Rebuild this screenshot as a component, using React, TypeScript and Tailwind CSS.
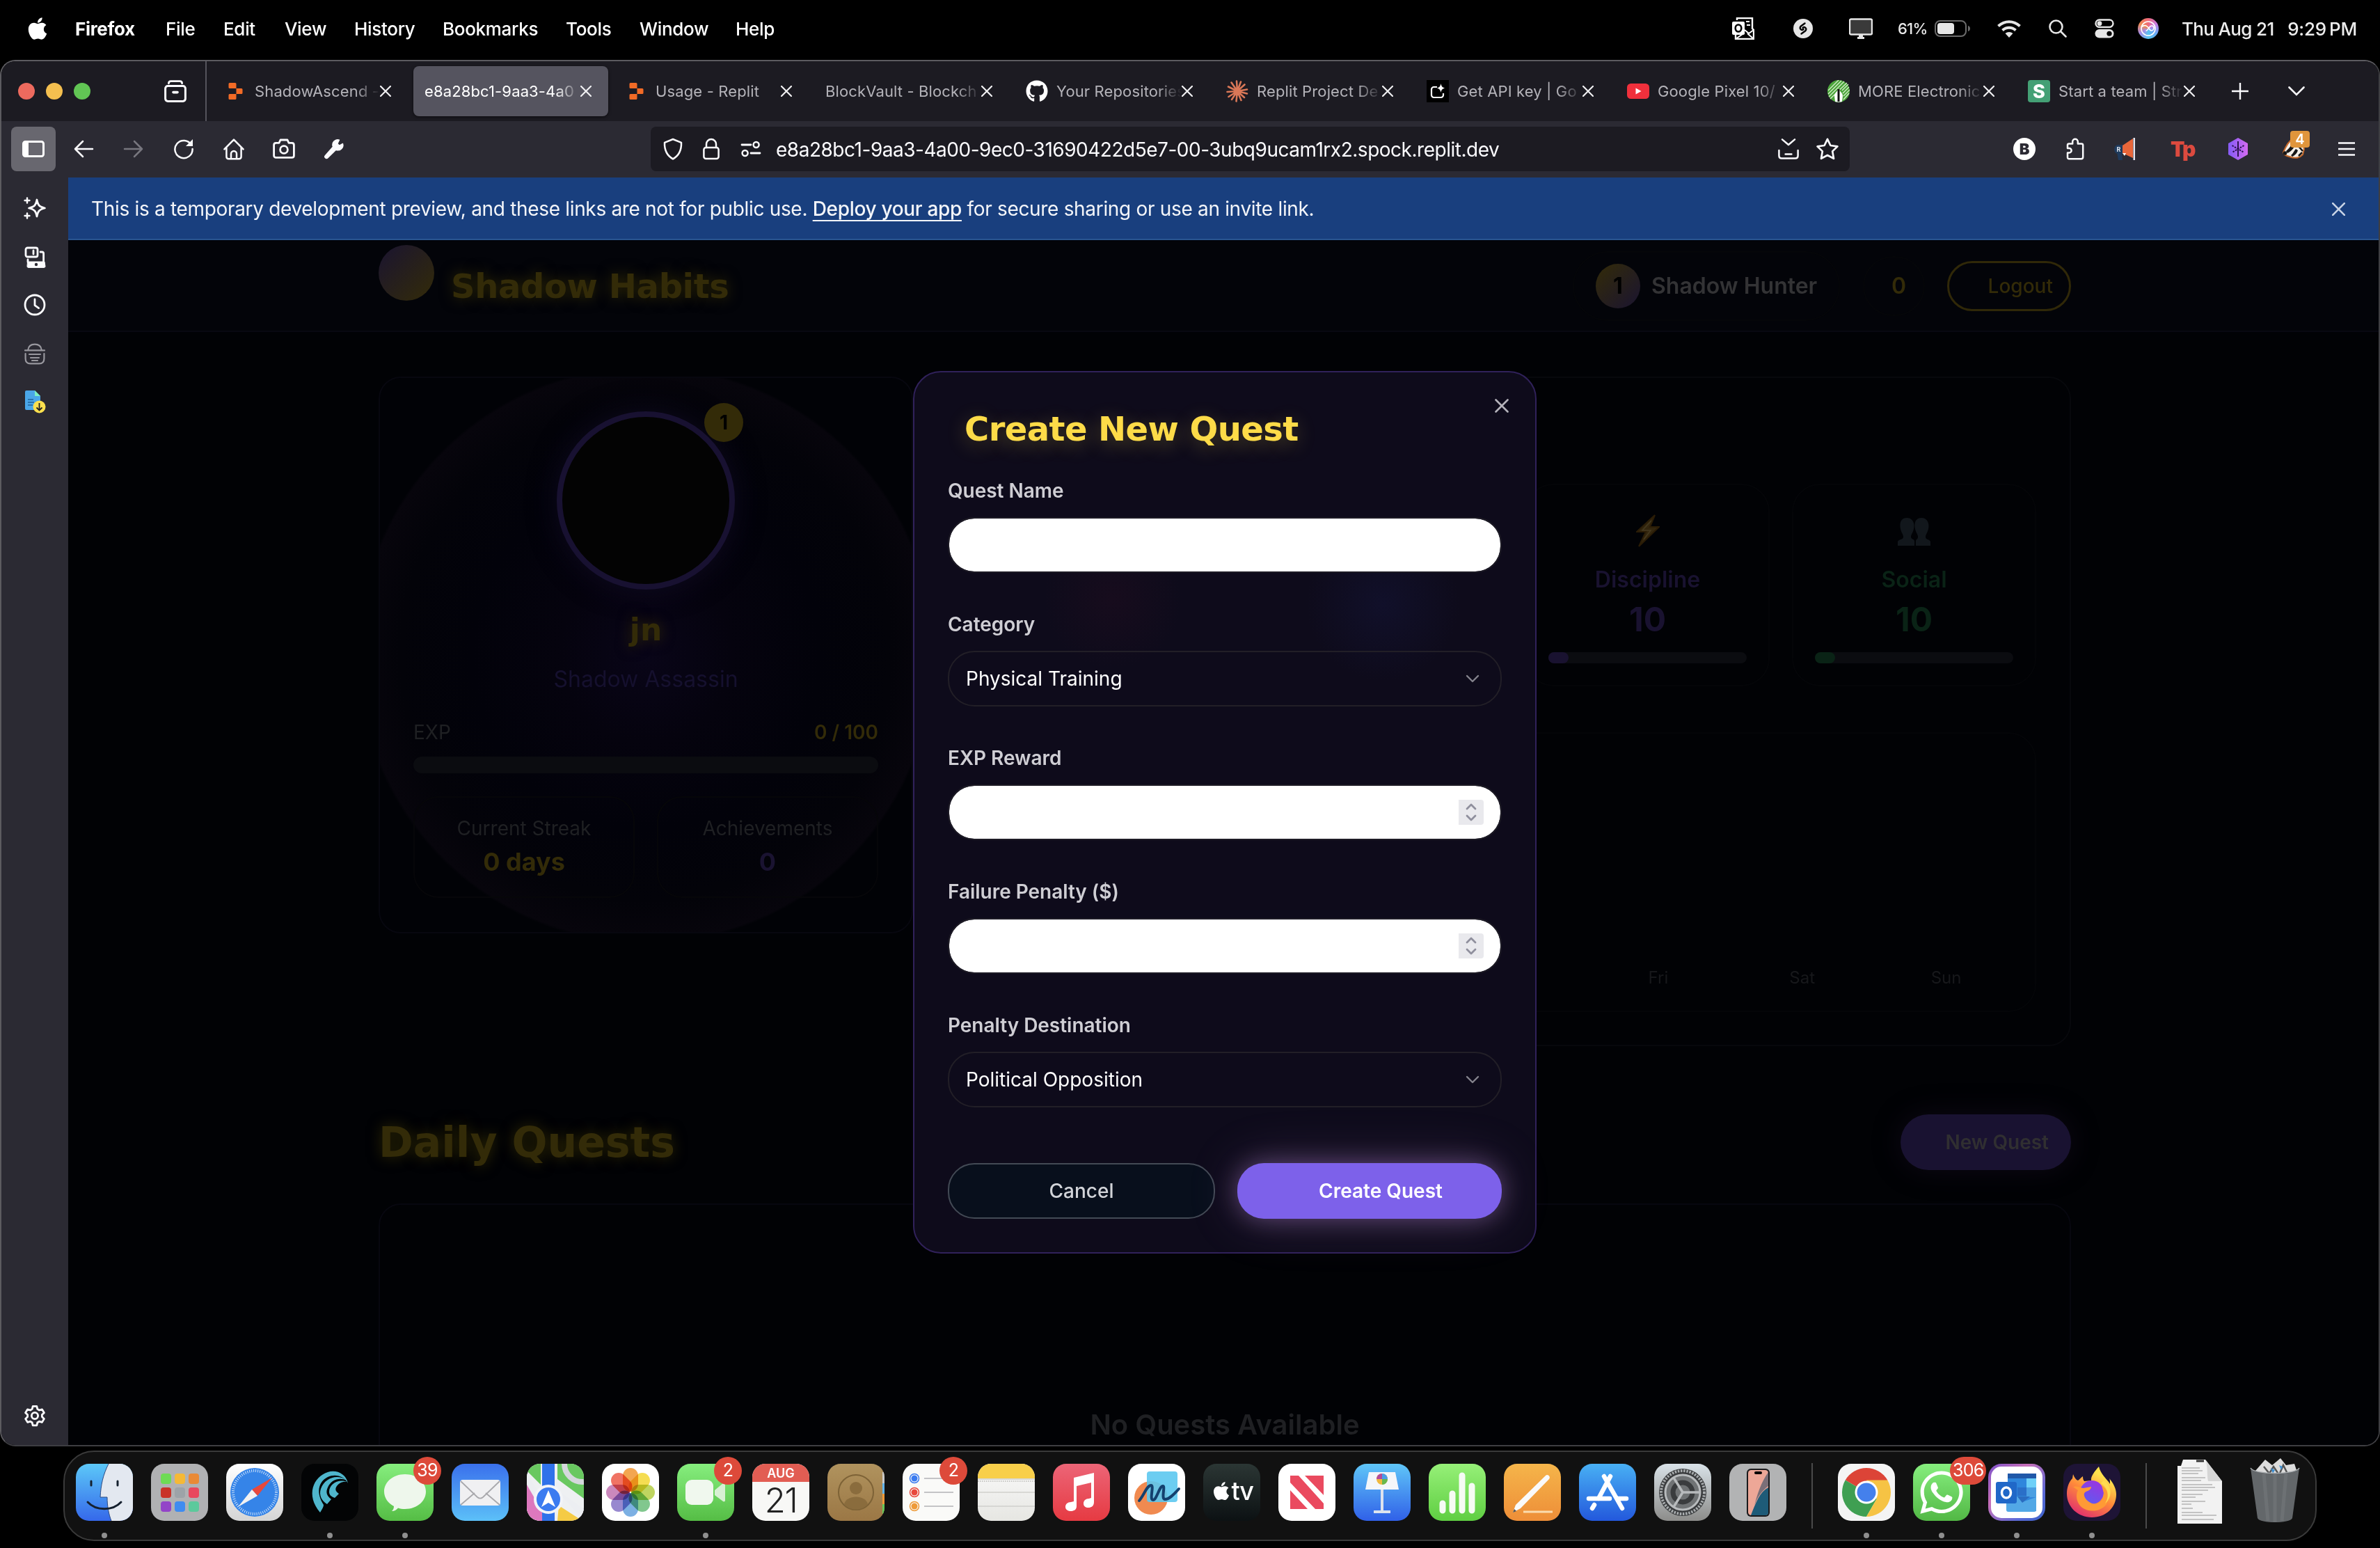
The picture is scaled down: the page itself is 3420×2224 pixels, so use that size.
import React from "react";
import { FaApple, FaGithub, FaWhatsapp } from "react-icons/fa";

type Kids = { children?: React.ReactNode; className?: string };

/* 16-unit stroked glyph used through the browser chrome */
function Glyph({ children, className = "size-8" }: Kids) {
  return (
    <svg viewBox="0 0 16 16" className={className} fill="none" stroke="currentColor" strokeWidth="1.25" strokeLinecap="round" strokeLinejoin="round">
      {children}
    </svg>
  );
}

const Close = ({ className = "size-4" }: { className?: string }) => (
  <svg viewBox="0 0 16 16" className={className} fill="none" stroke="currentColor" strokeWidth="2.2" strokeLinecap="round">
    <path d="M1 1l14 14M15 1L1 15" />
  </svg>
);

/* ---------- macOS menu bar ---------- */
function MenuBar() {
  return (
    <div className="flex h-[86px] shrink-0 items-center pb-1 text-[26px] tracking-[-0.012em] text-white">
      <FaApple className="ml-[36px] size-[36px]" />
      <div className="ml-[36px] w-[130px] font-bold">Firefox</div>
      <div className="w-[83px] font-medium">File</div>
      <div className="w-[88px] font-medium">Edit</div>
      <div className="w-[100px] font-medium">View</div>
      <div className="w-[127px] font-medium">History</div>
      <div className="w-[177px] font-medium">Bookmarks</div>
      <div className="w-[106px] font-medium">Tools</div>
      <div className="w-[138px] font-medium">Window</div>
      <div className="font-medium">Help</div>
      <div className="ml-auto flex items-center">
        <svg viewBox="0 0 32 32" className="size-8">
          <path d="M7 4V1h22v15l2 2v13H5v-6" fill="none" stroke="#fff" strokeWidth="2.4" />
          <path d="M18 18l6 5 7-5M5 31l13-9M31 31l-9-8" fill="none" stroke="#fff" strokeWidth="2" />
          <rect x="0" y="6" width="18" height="19" rx="2" fill="#fff" />
          <ellipse cx="9" cy="15.500" rx="4.300" ry="5" fill="none" stroke="#000" strokeWidth="2.600" />
          <path d="M20 6h5M21 11h5" stroke="#fff" strokeWidth="2" />
        </svg>
        <svg viewBox="0 0 28 28" className="ml-[56px] size-7">
          <circle cx="14" cy="14" r="14" fill="#e6e6e6" />
          <path d="M16.500 6.500l-5.500 4c-3.500 3 .5 7 3.500 4.500M11.500 21.500l5.500-4c3.500-3-.5-7-3.500-4.500" fill="none" stroke="#000" strokeWidth="2.400" strokeLinecap="round" />
        </svg>
        <svg viewBox="0 0 34 30" className="ml-[52px] h-[30px] w-[34px]">
          <rect x="1" y="1.500" width="32" height="22" rx="2" fill="#3a3a3a" stroke="#e6e6e6" strokeWidth="2.400" />
          <path d="M12 27h10v3H12zM14 24h6v3h-6z" fill="#e6e6e6" />
        </svg>
        <div className="ml-[36px] w-[53px] text-[22px] font-medium tracking-[-0.035em] text-[#e8e8e8]">61%</div>
        <svg viewBox="0 0 52 24" className="h-6 w-[52px]">
          <rect x="1" y="1" width="44" height="22" rx="7" fill="none" stroke="#6b6b6b" strokeWidth="2" />
          <rect x="4" y="4" width="24" height="16" rx="4" fill="#e6e6e6" />
          <path d="M48 8c4 1 4 7 0 8z" fill="#6b6b6b" />
        </svg>
        <svg viewBox="0 0 34 25" className="ml-[38px] h-[25px] w-[34px] text-[#e6e6e6]" fill="none" stroke="currentColor" strokeWidth="4">
          <path d="M1.500 8.500c9-8.500 22-8.500 31 0M7.500 14.500c5.500-5 13.500-5 19 0" />
          <path d="M17 25l-5.500-6c3-2.700 8-2.700 11 0z" fill="currentColor" stroke="none" />
        </svg>
        <svg viewBox="0 0 26 26" className="ml-[40px] size-[26px] text-[#e6e6e6]" fill="none" stroke="currentColor" strokeWidth="2.600" strokeLinecap="round">
          <circle cx="10.500" cy="10.500" r="9" />
          <path d="M17 17l7.500 7.500" />
        </svg>
        <svg viewBox="0 0 28 28" className="ml-[40px] size-7">
          <rect x="1.500" y="1.500" width="25" height="10.500" rx="5.250" fill="none" stroke="#e6e6e6" strokeWidth="2.400" />
          <circle cx="7" cy="6.750" r="3.400" fill="#e6e6e6" />
          <rect x="0.500" y="15" width="27" height="12.500" rx="6.250" fill="#e6e6e6" />
          <circle cx="21" cy="21.250" r="3.600" fill="#000" />
        </svg>
        <div className="ml-[34px] flex size-[30px] items-center justify-center rounded-full bg-[conic-gradient(from_0deg,#f06a7a,#c77be0,#6aa8f5,#58c5f0,#a58de8,#ee8a50,#f06a7a)]">
          <svg viewBox="0 0 24 24" className="size-6" fill="none" stroke="#fff" strokeWidth="1.600">
            <circle cx="12" cy="12" r="10" />
            <path d="M3 9.500c4-4 8-1 10 2.500s5 4 6.500 1-1-6-4-4.500-3.500 6-7 7" />
          </svg>
        </div>
        <div className="ml-[33px] mr-[33px] flex w-[252px] justify-between font-medium tracking-[-0.025em] whitespace-nowrap text-[#ececec]">
          <span>Thu Aug 21</span>
          <span className="tracking-[-0.01em]">9:29{"\u2009"}PM</span>
        </div>
      </div>
    </div>
  );
}

/* ---------- tab favicons ---------- */
const ReplitIcon = () => (
  <svg viewBox="0 0 32 32" className="size-8" fill="#f26b26">
    <path d="M8 4h8a1.500 1.500 0 011.500 1.500V12H8a1.500 1.500 0 01-1.500-1.500v-5A1.500 1.500 0 018 4zM17.500 12H25a1.500 1.500 0 011.500 1.500v5A1.500 1.500 0 0125 20h-7.500zM8 20h9.500v6.500A1.500 1.500 0 0116 28H8a1.500 1.500 0 01-1.500-1.500v-5A1.500 1.500 0 018 20z" />
  </svg>
);
const ClaudeIcon = () => (
  <svg viewBox="0 0 32 32" className="size-8" stroke="#d97757" strokeWidth="2.600" strokeLinecap="round">
    <path d="M16 16L15 1.500M16 16l5-13.500M16 16l10.500-9.500M16 16l14-2.500M16 16l14 3.500M16 16l10 9M16 16l5.500 13M16 16l-1.500 14.500M16 16L8 28M16 16L3.500 24M16 16L1.500 17M16 16L3 9.500M16 16L7.500 3.500" />
  </svg>
);
const ApiIcon = () => (
  <svg viewBox="0 0 32 32" className="size-8">
    <rect width="32" height="32" fill="#000" />
    <path d="M15 10H10.500A3.500 3.500 0 007 13.500v8a3.500 3.500 0 003.500 3.500h10a3.500 3.500 0 003.500-3.500V19" fill="none" stroke="#fff" strokeWidth="2.200" />
    <path d="M20.500 5c.8 4 2 5.500 5.500 6.500-3.500 1-4.700 2.500-5.500 6.500-.8-4-2-5.500-5.500-6.500 3.500-1 4.700-2.500 5.500-6.500z" fill="#fff" />
  </svg>
);
const YoutubeIcon = () => (
  <svg viewBox="0 0 32 32" className="size-8">
    <rect y="5" width="32" height="22" rx="5.500" fill="#f0303c" />
    <path d="M12.500 11.500v9l8-4.500z" fill="#fff" />
  </svg>
);
const DollarTreeIcon = () => (
  <svg viewBox="0 0 32 32" className="size-8">
    <circle cx="16" cy="16" r="16" fill="#4ba43a" />
    <path d="M1 15L16 0M1 20L20 1M2 24L24 2M4 27L28 4M21 15l9-9M22 19l9-9M23 23l9-9M23 28l8-9" stroke="#d9f0d0" strokeWidth="1.200" />
    <path d="M16 12c1.500 5 6 6 6 11l-1 8a16 16 0 01-10 0l-1-8c0-5 4.500-6 6-11z" fill="#fff" />
    <path d="M16 13v18" stroke="#111" strokeWidth="3" />
  </svg>
);
const StripeIcon = () => (
  <div className="flex size-8 items-center justify-center rounded-[4px] bg-[#44a075] text-[27px] leading-none font-extrabold text-white">S</div>
);

function Tab({ icon, title, active }: { icon?: React.ReactNode; title: string; active?: boolean }) {
  return (
    <div className={active ? "flex h-[72px] w-[280px] items-center rounded-[8px] bg-[#55545f] px-4 text-white shadow-[0_1px_4px_rgba(0,0,0,0.6)]" : "flex h-[72px] w-[280px] items-center px-4 text-[#b4b3b9]"}>
      {icon && <div className="mr-3 shrink-0">{icon}</div>}
      <div className="min-w-0 flex-1 text-[22px] tracking-[0.006em] whitespace-nowrap [mask-image:linear-gradient(to_right,black_calc(100%-36px),transparent)]">{title}</div>
      <Close className="mr-2 size-4 shrink-0 text-[#f0f0f2]" />
    </div>
  );
}

function TabStrip() {
  return (
    <div className="flex h-[86px] shrink-0 items-center bg-[#1c1b22]">
      <div className="ml-[24px] flex gap-4">
        <div className="size-6 rounded-full bg-[#ed6a5e]" />
        <div className="size-6 rounded-full bg-[#f4bf4f]" />
        <div className="size-6 rounded-full bg-[#61c554]" />
      </div>
      <Glyph className="ml-[106px] size-8 text-[#fbfbfe]">
        <path d="M3.200 2.400C3.200 1.200 3.800.8 4.800.8h6.400c1 0 1.600.4 1.600 1.600" strokeWidth="1.400" />
        <rect x="0.800" y="4.200" width="14.400" height="11" rx="1.800" strokeWidth="1.500" />
        <path d="M6.500 8.800h3" strokeWidth="1.800" />
      </Glyph>
      <div className="ml-[27px] h-[86px] w-[2px] bg-[#55545c]" />
      <div className="ml-[9px] flex gap-2">
        <Tab icon={<ReplitIcon />} title="ShadowAscend -" />
        <Tab title="e8a28bc1-9aa3-4a0" active />
        <Tab icon={<ReplitIcon />} title="Usage - Replit" />
        <Tab title="BlockVault - Blockch" />
        <Tab icon={<FaGithub className="size-8 text-white" />} title="Your Repositories" />
        <Tab icon={<ClaudeIcon />} title="Replit Project De" />
        <Tab icon={<ApiIcon />} title="Get API key | Go" />
        <Tab icon={<YoutubeIcon />} title="Google Pixel 10/" />
        <Tab icon={<DollarTreeIcon />} title="MORE Electronic" />
        <Tab icon={<StripeIcon />} title="Start a team | Str" />
      </div>
      <svg viewBox="0 0 24 24" className="ml-[29px] size-6 text-[#fbfbfe]" stroke="currentColor" strokeWidth="2.400">
        <path d="M12 0v24M0 12h24" />
      </svg>
      <svg viewBox="0 0 24 14" className="ml-[57px] h-[14px] w-6 text-[#fbfbfe]" fill="none" stroke="currentColor" strokeWidth="2.600" strokeLinecap="round">
        <path d="M1.500 1.500L12 12 22.500 1.500" />
      </svg>
    </div>
  );
}

function Toolbar() {
  return (
    <div className="flex h-[81px] shrink-0 items-center bg-[#2b2a33] pr-[34px] pb-px text-[#fbfbfe]">
      <div className="ml-[14px] flex h-16 w-16 items-center justify-center rounded-[8px] bg-[#68676f]">
        <svg viewBox="0 0 32 24" className="h-6 w-8">
          <rect x="1.500" y="1.500" width="29" height="21" rx="3" fill="none" stroke="#fff" strokeWidth="3" />
          <path d="M1 2h8v20H1z" fill="#fff" />
        </svg>
      </div>
      <div className="ml-[24px] flex items-center gap-[40px]">
        <Glyph className="size-8"><path d="M14.500 8H2M7.500 2.500L2 8l5.500 5.500" /></Glyph>
        <Glyph className="size-8 text-[#77767e]"><path d="M1.500 8H14M8.500 2.500L14 8l-5.500 5.500" /></Glyph>
        <Glyph className="size-8">
          <path d="M13.500 5.200A6.300 6.300 0 1014.300 8" />
          <path d="M14.500 1v5h-5z" fill="currentColor" stroke="none" />
        </Glyph>
        <Glyph className="size-8"><path d="M1.200 8.200L8 1.300l6.800 6.900M2.700 7v6.500c0 1 .6 1.600 1.600 1.600h7.400c1 0 1.600-.6 1.600-1.600V7M6 15v-3.500a2 2 0 014 0V15" /></Glyph>
        <Glyph className="size-8">
          <path d="M2.300 3.700h2.200l1-2.200h5l1 2.200h2.200c.9 0 1.500.6 1.500 1.500v7.500c0 .9-.6 1.500-1.500 1.500H2.300c-.9 0-1.500-.6-1.500-1.500V5.200c0-.9.600-1.500 1.500-1.500z" strokeWidth="1.400" />
          <circle cx="8" cy="8.500" r="2.700" strokeWidth="1.400" />
        </Glyph>
        <Glyph className="size-8"><path d="M14.300 4.200l-2.500 1.300-1.300-1.300 1.300-2.700a3.700 3.700 0 00-4.600 4.900L1.700 12.700a1.200 1.200 0 001.800 1.700l5.900-5.700a3.700 3.700 0 004.900-4.500z" fill="currentColor" strokeWidth="0.600" /></Glyph>
      </div>
      <div className="ml-[439px] flex h-16 w-[1723px] items-center rounded-[8px] bg-[#1c1b22] px-4">
        <Glyph className="size-8"><path d="M8 1l6 2.400C14.200 9 12 13 8 15.200 4 13 1.800 9 2 3.400z" /></Glyph>
        <Glyph className="ml-[23px] size-8"><rect x="2.700" y="7" width="10.600" height="8" rx="1.500" /><path d="M4.500 7V4.500a3.500 3.500 0 017 0V7" /></Glyph>
        <Glyph className="ml-[25px] size-8"><path d="M1.500 5h6.500M8 11h6.500" strokeWidth="1.400" /><circle cx="11.800" cy="5" r="2" /><circle cx="3.800" cy="11" r="2" /></Glyph>
        <div className="ml-[20px] pt-0.5 text-[28px] tracking-[-0.0172em] whitespace-nowrap">e8a28bc1-9aa3-4a00-9ec0-31690422d5e7-00-3ubq9ucam1rx2.spock.replit.dev</div>
        <Glyph className="ml-auto size-8"><path d="M3.500 1.200L8 5l4.500-3.800M1.200 9v3.800c0 1.200.7 2 1.900 2h9.800c1.200 0 1.900-.8 1.900-2V9M5.800 11.700h4.400" /></Glyph>
        <Glyph className="ml-[24px] size-8"><path d="M8 .9l2.200 4.600 5 .7-3.600 3.500.9 5.200L8 12.500l-4.500 2.400.9-5.200L.8 6.200l5-.7z" strokeWidth="1.350" /></Glyph>
      </div>
      <div className="ml-auto flex items-center">
        <div className="flex size-8 items-center justify-center rounded-full bg-white text-[22px] font-black text-[#2b2a33]">B</div>
        <Glyph className="ml-[42px] size-8"><path d="M2 14v-3.300h1.200a1.600 1.600 0 000-3.200H2V5.300c0-.7.400-1 1-1h2.600V2.800a1.900 1.900 0 013.800 0v1.500H12c.7 0 1.100.4 1.100 1.100v8.500c0 .8-.5 1.200-1.200 1.200H3.100c-.7 0-1.100-.5-1.100-1.100z" /></Glyph>
        <svg viewBox="0 0 32 32" className="ml-[38px] size-8">
          <path d="M14 10v13H6c-6-1-7-11 0-13z" fill="#1f3a5c" />
          <path d="M5 21h7l1 11H7z" fill="#1f3a5c" />
          <path d="M13 11L28 1v28L13 22z" fill="#e8663a" />
          <path d="M28.500 0H31v32h-2.500z" fill="#e4e4ee" />
          <path d="M13 22h5l-2 4z" fill="#fff" />
          <text x="4.500" y="20" fontSize="9" fontWeight="700" fill="#dfe6ee">R</text>
        </svg>
        <div className="ml-[50px] w-[34px] text-center text-[30px] leading-8 font-black tracking-[-0.06em] text-[#dc4a3f]">Tp</div>
        <svg viewBox="0 0 32 32" className="ml-[47px] size-8">
          <defs>
            <linearGradient id="hex" x1="0" x2="1"><stop offset="0.100" stopColor="#8a5cf6" /><stop offset="1" stopColor="#d46af0" /></linearGradient>
          </defs>
          <path d="M16 0l14 8v16l-14 8-14-8V8z" fill="url(#hex)" />
          <path d="M16 5v22" stroke="#2a1250" strokeWidth="2" />
          <path d="M7.500 11l17 10M24.500 11l-17 10" stroke="#2a1250" strokeWidth="2" strokeDasharray="2.500 1.500" />
        </svg>
        <div className="relative ml-[48px] size-8">
          <svg viewBox="0 0 32 32" className="size-8">
            <path d="M1 21C4 14 8 5 14 2c8-1 15 6 17 14l-2 8c-5 5-12 6-19 3-4-1-8-2-9-6z" fill="#f4efe8" stroke="#c66a2c" strokeWidth="2" />
            <path d="M5 19c4-3 8-8 10-16l5 4c-3 6-6 12-13 15zM12 25c3-2 4-6 7-9l3 2c-1 4-4 7-8 9z" fill="#161616" />
            <path d="M22 11l7 8M23 26l5-5" stroke="#161616" strokeWidth="2.500" />
            <circle cx="3.500" cy="22" r="2.800" fill="#161616" />
          </svg>
          <div className="absolute -top-[10px] left-[11px] flex h-6 w-7 items-center justify-center rounded-[4px] bg-[#e0953c] text-[20px] font-semibold text-white">4</div>
        </div>
        <svg viewBox="0 0 24 20" className="ml-[48px] h-5 w-6" stroke="currentColor" strokeWidth="2.400">
          <path d="M0 1.500h24M0 10h24M0 18.500h24" />
        </svg>
      </div>
    </div>
  );
}

function Sidebar() {
  return (
    <div className="flex w-[96px] shrink-0 flex-col items-center bg-[#2b2a33] pt-[28px] text-[#fbfbfe]">
      <Glyph className="size-8">
        <path d="M9.500 2c.8 4 1.700 5 5.700 6-4 1-4.900 2-5.700 6-.8-4-1.700-5-5.700-6 4-1 4.900-2 5.700-6z" strokeWidth="1.400" />
        <path d="M2.500.8v3.400M.8 2.500h3.400M2.500 11.800v3.400M.8 13.500h3.400" />
      </Glyph>
      <Glyph className="mt-[39px] size-8">
        <rect x="1.500" y="1" width="8.500" height="6.500" rx="1.300" strokeWidth="1.400" />
        <path d="M7 3v2.500M12 4h1.200c.7 0 1.100.4 1.100 1.100v6M3 9.500v1.800" strokeWidth="1.400" />
        <path d="M3 11h12l.5 3.300c0 .6-.3.900-.9.900H3.400c-.6 0-.9-.3-.9-.9z" fill="currentColor" strokeWidth="0.500" />
        <circle cx="9" cy="13" r="1.100" fill="#2b2a33" stroke="none" />
      </Glyph>
      <Glyph className="mt-[36px] size-8"><circle cx="8" cy="8" r="7" strokeWidth="1.400" /><path d="M8 4v4.300l2.800 2" strokeWidth="1.400" /></Glyph>
      <Glyph className="mt-[38px] size-8 text-[#98979e]">
        <path d="M3.200 5.200C3.500 2.500 5 1.300 8 1.300s4.500 1.200 4.800 3.900M1 5.700h14M4 8.500h8M5 11h6M6 13h4M1.300 8v3.500c0 2.300 1.200 3.700 3.500 3.700h6.400c2.300 0 3.500-1.400 3.500-3.700V8" strokeWidth="1.100" />
      </Glyph>
      <svg viewBox="0 0 32 34" className="mt-[36px] h-[34px] w-8">
        <path d="M4 1h12l8 8v20H4a2 2 0 01-2-2V3a2 2 0 012-2z" fill="#4aa6e8" />
        <path d="M16 1l8 8h-8z" fill="#7df0c0" />
        <path d="M6 14h8M6 18h9M6 22h7" stroke="#20639b" strokeWidth="1.600" />
        <circle cx="22.500" cy="24.500" r="9" fill="#fbe04e" />
        <path d="M22.500 19v10M18.500 25.500l4 4 4-4" fill="none" stroke="#222" strokeWidth="1.800" />
      </svg>
      <Glyph className="mt-auto mb-[26px] size-8">
        <circle cx="8" cy="8" r="2.300" strokeWidth="1.400" />
        <path d="M6.600 1.200h2.800l.5 2 1.300.8 2-.6 1.500 2.500L13.200 7.300v1.500l1.500 1.400-1.500 2.500-2-.6-1.300.8-.5 2H6.600l-.5-2-1.300-.8-2 .6-1.500-2.500 1.500-1.400V7.300L1.300 5.900l1.500-2.500 2 .6 1.300-.8z" strokeWidth="1.400" />
      </Glyph>
    </div>
  );
}

/* ---------- dimmed page under the dialog ---------- */
const glow = "font-['DejaVu_Sans'] font-bold text-[#332b08] [text-shadow:0_0_20px_rgba(80,68,0,0.6)]";

function PageHeader() {
  return (
    <div className="flex h-[132px] shrink-0 items-center border-b-2 border-[#080811] bg-[#030409] pt-[2px] pr-[442px] pl-[446px]">
      <div className="mb-[38px] size-20 rounded-full bg-[linear-gradient(135deg,#1a1430,#332b08)]" />
      <div className={`${glow} ml-[24px] text-[48px] leading-[64px] tracking-[-0.008em] whitespace-nowrap`}>Shadow Habits</div>
      <div className="ml-auto flex h-[100px] w-[384px] items-center rounded-[50px] border-2 border-[#050609] pl-[31px]">
        <div className="flex size-16 items-center justify-center rounded-full bg-[linear-gradient(135deg,#332b08,#1a1430)] text-[32px] font-bold text-black">1</div>
        <div className="ml-[16px] text-[32px] font-semibold whitespace-nowrap text-[#333335]">Shadow Hunter</div>
      </div>
      <div className="ml-[33px] flex h-[86px] w-[89px] items-center justify-end rounded-[43px] border-2 border-[#050609] pr-[25px] text-[32px] font-semibold text-[#332b08]">0</div>
      <div className="ml-[32px] flex h-[72px] w-[178px] items-center justify-end rounded-[36px] border-[3px] border-[#302808] pr-[23px] text-[28px] font-medium text-[#332b08]">Logout</div>
    </div>
  );
}

function ProfileCard() {
  return (
    <div className="h-[800px] w-[768px] rounded-[32px] border-2 border-[#07070f] bg-[radial-gradient(circle_415px_at_center,#090518_0%,#05030e_30%,#02020a_60%,#030309_85%,#07050c_99%,#010206_100%)] px-12 pt-12">
      <div className="relative mx-auto size-64 rounded-full border-8 border-[#181131] bg-[#030303] shadow-[0_0_40px_rgba(24,16,50,0.5)]">
        <div className="absolute -top-[20px] -right-[20px] flex size-14 items-center justify-center rounded-full bg-[#332b08] text-[28px] font-bold text-black">1</div>
      </div>
      <div className={`${glow} mt-[26px] text-center text-[44px] leading-[64px]`}>jn</div>
      <div className="mt-[15px] text-center text-[32px] leading-[48px] text-[#15102e]">Shadow Assassin</div>
      <div className="mt-8 flex justify-between text-[28px] leading-[40px]">
        <span className="text-[#1f2023]">EXP</span>
        <span className="font-semibold text-[#332b08]">0 / 100</span>
      </div>
      <div className="mt-[15px] h-6 rounded-full bg-[#0b0c10]" />
      <div className="mt-[33px] grid grid-cols-2 gap-8 text-center">
        <div className="h-[146px] rounded-[36px] border-2 border-[#060609] pt-6">
          <div className="text-[28px] leading-[40px] text-[#1f2023]">Current Streak</div>
          <div className="text-[36px] leading-[56px] font-bold text-[#332b08]">0 days</div>
        </div>
        <div className="h-[146px] rounded-[36px] border-2 border-[#060609] pt-6">
          <div className="text-[28px] leading-[40px] text-[#1f2023]">Achievements</div>
          <div className="text-[36px] leading-[56px] font-bold text-[#1a1331]">0</div>
        </div>
      </div>
    </div>
  );
}

function StatCard({ icon, label, text, fill }: { icon?: React.ReactNode; label: string; text: string; fill: string }) {
  return (
    <div className="h-[291px] rounded-[40px] border-2 border-[#040508] px-[31px] pt-[31px] text-center">
      <div className="flex h-[68px] items-center justify-center">{icon}</div>
      <div className={`mt-[13px] text-[32px] leading-[48px] font-semibold ${text}`}>{label}</div>
      <div className={`text-[48px] leading-[65px] font-bold ${text}`}>10</div>
      <div className="mt-[15px] h-4 rounded-full bg-[#0b0c10]">
        <div className={`h-4 w-[10%] rounded-full ${fill}`} />
      </div>
    </div>
  );
}

function StatsCard() {
  return (
    <div className="h-[962px] w-[1600px] rounded-[32px] border-2 border-[#07080c] px-12 pt-[152px]">
      <div className="grid grid-cols-4 gap-8">
        <StatCard label="Strength" text="text-[#260d10]" fill="bg-[#260d10]" />
        <StatCard label="Intellect" text="text-[#0d1730]" fill="bg-[#0d1730]" />
        <StatCard
          label="Discipline"
          text="text-[#191230]"
          fill="bg-[#191230]"
          icon={
            <svg viewBox="0 0 34 47" className="h-[47px] w-[34px]">
              <path d="M27 1L1 25h13L4 46l29-28H20z" fill="#33260e" stroke="#2a1c06" strokeWidth="2" />
              <path d="M22 9L9 23h12L11 36" fill="none" stroke="#463a20" strokeWidth="1.500" />
            </svg>
          }
        />
        <StatCard
          label="Social"
          text="text-[#0a2316]"
          fill="bg-[#0a2316]"
          icon={
            <svg viewBox="0 0 47 40" className="mt-1 h-10 w-[47px]" fill="#12171c">
              <path d="M13 0c8 0 12 7 10 16-1 5-4 8-4 11 0 4 4 3 5 6v7H0v-6c2-4 8-2 8-7 0-3-3-6-4-11C2 7 5 0 13 0z" />
              <path d="M34 0c8 0 12 7 10 16-1 5-4 8-4 11 0 5 5 3 7 7v6H26v-7c1-3 3-2 3-6 0-3-3-6-4-11C23 7 26 0 34 0z" />
            </svg>
          }
        />
      </div>
      <div className="mt-[66px] grid h-[402px] grid-cols-7 items-end rounded-[40px] border-2 border-[#040508] px-6 pb-[27px] text-center text-[24px] leading-[40px] text-[#17181b]">
        <span>Mon</span><span>Tue</span><span>Wed</span><span>Thu</span><span>Fri</span><span>Sat</span><span>Sun</span>
      </div>
    </div>
  );
}

function Page() {
  return (
    <div className="flex min-w-0 flex-1 flex-col overflow-hidden bg-[#010205]">
      <PageHeader />
      <div className="ml-[446px] w-[2432px] pt-16">
        <div className="flex items-start justify-between">
          <ProfileCard />
          <StatsCard />
        </div>
        <div className="mt-[98px] flex h-20 items-center justify-between">
          <div className={`${glow} text-[60px] leading-[80px] whitespace-nowrap`}>Daily Quests</div>
          <div className="flex h-20 w-[245px] items-center justify-end rounded-[40px] bg-[#191231] pr-8 text-[28px] font-semibold text-[#302f31] shadow-[0_0_40px_rgba(40,22,50,0.35)]">New Quest</div>
        </div>
        <div className="mt-12 h-[400px] rounded-[32px] border-2 border-[#07070f] pt-[286px] text-center text-[40px] leading-[60px] font-semibold text-[#1f2023]">No Quests Available</div>
      </div>
    </div>
  );
}

/* ---------- quest dialog ---------- */
const Label = ({ children }: Kids) => <div className="mb-[18px] h-10 text-[28px] leading-[40px] font-semibold tracking-[-0.001em] text-[#cfced4]">{children}</div>;

function TextField({ label, spinner }: { label: string; spinner?: boolean }) {
  return (
    <div>
      <Label>{label}</Label>
      <div className="flex h-20 items-center justify-end rounded-[38px] border-2 border-[#1d1b25] bg-white bg-clip-padding pr-6">
        {spinner && (
          <div className="flex h-9 w-9 items-center justify-center rounded-r-[4px] bg-[#e9e9ed]">
            <svg viewBox="0 0 16 26" className="h-[26px] w-4" fill="none" stroke="#8f8f9d" strokeWidth="2.800" strokeLinecap="round" strokeLinejoin="round">
              <path d="M2 8l6-6 6 6M2 18l6 6 6-6" />
            </svg>
          </div>
        )}
      </div>
    </div>
  );
}

function SelectField({ label, value }: { label: string; value: string }) {
  return (
    <div>
      <Label>{label}</Label>
      <div className="flex h-20 items-center justify-between rounded-[38px] border-2 border-[#221f27] pr-[30px] pl-[24px] text-[28px] text-white">
        {value}
        <svg viewBox="0 0 20 12" className="h-3 w-5" fill="none" stroke="#85848d" strokeWidth="2.400" strokeLinecap="round" strokeLinejoin="round">
          <path d="M2 2l8 8 8-8" />
        </svg>
      </div>
    </div>
  );
}

function QuestDialog() {
  return (
    <div className="absolute top-[445px] left-[1310px] h-[1268px] w-[896px] rounded-[40px] border-2 border-[#30215a] bg-[#0e0b1b] bg-[radial-gradient(circle_at_285px_325px,#170c1d_0,transparent_100px),radial-gradient(circle_at_673px_333px,#11102a_0,transparent_110px)] px-12 pt-12">
      <svg viewBox="0 0 20 20" className="absolute top-[38px] right-[38px] size-5" fill="none" stroke="#b5b3bb" strokeWidth="2.600" strokeLinecap="round">
        <path d="M1.500 1.500l17 17M18.500 1.500l-17 17" />
      </svg>
      <div className="pl-[24px] font-['DejaVu_Sans'] text-[48px] leading-[66px] font-bold tracking-[-0.012em] whitespace-nowrap text-[#fddb48] [text-shadow:0_6px_28px_rgba(253,219,72,0.28)]">Create New Quest</div>
      <div className="mt-9 flex flex-col gap-[54px]">
        <TextField label="Quest Name" />
        <SelectField label="Category" value="Physical Training" />
        <TextField label="EXP Reward" spinner />
        <TextField label="Failure Penalty ($)" spinner />
        <SelectField label="Penalty Destination" value="Political Opposition" />
      </div>
      <div className="mt-20 flex justify-between text-[28px]">
        <div className="flex h-20 w-[384px] items-center justify-center rounded-[38px] border-2 border-[#434a55] bg-[#080f1c] font-medium text-[#d1d3d8]">Cancel</div>
        <div className="flex h-20 w-[380px] items-center justify-center rounded-[38px] bg-[#7d61ea] pl-8 font-semibold text-white shadow-[0_0_34px_rgba(176,130,210,0.42),0_0_76px_rgba(176,130,190,0.24)]">Create Quest</div>
      </div>
    </div>
  );
}

/* ---------- dock ---------- */
function DockItem({ children, dot, badge }: { children: React.ReactNode; dot?: boolean; badge?: string }) {
  return (
    <div className="relative flex h-[126px] w-[108px] shrink-0 flex-col items-center pt-[17px]">
      {children}
      {dot && <div className="mt-[17px] size-2 rounded-full bg-[#8f8f8f]" />}
      {badge && (
        <div className="absolute top-[7px] left-[66px] flex h-10 min-w-10 items-center justify-center rounded-full bg-[#dd4a3a] px-1 text-[25px] tracking-[-0.03em] text-white">{badge}</div>
      )}
    </div>
  );
}

function AppIcon({ children, className = "" }: Kids) {
  return (
    <div className={`size-[82px] shrink-0 overflow-hidden rounded-[19px] ${className}`}>
      <svg viewBox="0 0 82 82" className="size-[82px]">{children}</svg>
    </div>
  );
}

const petals = [
  ["#f29a38", 0], ["#f4d93a", 45], ["#b6cf4a", 90], ["#6fc07e", 135],
  ["#6aa5e0", 180], ["#8a79c9", 225], ["#c479b4", 270], ["#ee5f4e", 315],
] as const;
const pads = ["#6edb55", "#f5b936", "#e98a36", "#c93228", "#9da3a8", "#e8485e", "#9344c8", "#3f8cf0", "#5cc99c"];

function Dock() {
  return (
    <div className="ml-[91px] flex h-[130px] w-[3238px] shrink-0 rounded-[44px] border-2 border-[#3a3a3a] bg-[#111111] pl-[3px]">
      <DockItem dot>
        <AppIcon className="bg-[linear-gradient(#5cc8f8,#3568ea)]">
          <path d="M47 0C39 16 36 30 35 48h10c0 12 2 24 6 34h31V0z" fill="#e3e8f0" />
          <path d="M47 0C39 16 36 30 35 48h10c0 12 2 24 6 34" fill="none" stroke="#2c4a80" strokeWidth="1" />
          <path d="M22 25v6M60 25v6M17 55c12 13 36 13 48 0" fill="none" stroke="#15202e" strokeWidth="3" strokeLinecap="round" />
        </AppIcon>
      </DockItem>
      <DockItem>
        <AppIcon className="bg-[#b0b1b3]">
          {pads.map((c, i) => (
            <rect key={c} x={14 + (i % 3) * 20} y={14 + Math.floor(i / 3) * 20} width="15" height="15" rx="4" fill={c} />
          ))}
        </AppIcon>
      </DockItem>
      <DockItem>
        <AppIcon className="bg-[linear-gradient(#ffffff,#d4d4d4)]">
          <circle cx="41" cy="41" r="35" fill="#3584e8" />
          <circle cx="41" cy="41" r="31" fill="none" stroke="#cfe3fa" strokeWidth="4" strokeDasharray="1 2" />
          <path d="M66 20L45 46l-8-9z" fill="#e8483c" />
          <path d="M17 62l20-25 8 9z" fill="#f2f2f2" />
        </AppIcon>
      </DockItem>
      <DockItem dot>
        <AppIcon className="bg-[#030405]">
          <g fill="#4fb6cc">
            <path d="M67 28C64 14 50 8 38 12 17 19 6 45 27 70c3-5 5-8 5-11C21 42 24 26 38 19c11-5 24-1 29 9z" />
            <path d="M66 24C52 14 34 20 28 36c-3 9 1 17 9 22l6-7C36 46 35 40 38 34c5-11 16-15 28-10z" />
            <path d="M66 26c-14-5-26 4-26 14 0 5 3 7 8 9l6-6c-5-3-6-7-3-11 3-4 8-7 15-6z" />
          </g>
        </AppIcon>
      </DockItem>
      <DockItem dot badge="39">
        <AppIcon className="bg-[linear-gradient(#86ee7e,#55bd45)]">
          <path d="M41 15c17 0 30 11 30 25S58 65 41 65c-4 0-7-.5-10-1.500C29 66 26 68 22 68c2-2 3-4 3-7-8-4-14-12-14-21 0-14 13-25 30-25z" fill="#eef7ec" />
        </AppIcon>
      </DockItem>
      <DockItem>
        <AppIcon className="bg-[linear-gradient(#3a70ec,#5cc0f8)]">
          <rect x="12" y="23" width="58" height="37" rx="4" fill="#f0f0f2" />
          <path d="M13 25l24 23c3 2.500 5 2.500 8 0l24-23M13 59l20-17M69 59L49 42" fill="none" stroke="#a8a8ac" strokeWidth="1.800" />
        </AppIcon>
      </DockItem>
      <DockItem>
        <AppIcon className="bg-[#eef0f2]">
          <path d="M0 0h20v30L0 10zM44 0h38v50L44 22z" fill="#69c860" />
          <path d="M0 14l44 68H0z" fill="#eceef2" />
          <path d="M0 30l30 52H0z" fill="#dd78be" />
          <path d="M22 0h18v82H22z" fill="#2f72ea" />
          <path d="M46 60l34 22H44z" fill="#f5cb45" />
          <path d="M54 0a26 26 0 0028 26" fill="none" stroke="#d5d8dc" strokeWidth="8" />
          <path d="M40 35l42 30v17z" fill="#eceef2" />
          <circle cx="31" cy="51" r="19" fill="#3b7bf0" stroke="#f2f4f8" strokeWidth="4" />
          <path d="M31 38l10 24-10-6-10 6z" fill="#fff" />
        </AppIcon>
      </DockItem>
      <DockItem>
        <AppIcon className="bg-white">
          {petals.map(([c, a]) => (
            <rect key={c} x="30" y="6" width="22" height="34" rx="11" fill={c} opacity="0.88" className="mix-blend-multiply" transform={`rotate(${a} 41 41)`} />
          ))}
        </AppIcon>
      </DockItem>
      <DockItem dot badge="2">
        <AppIcon className="bg-[linear-gradient(#86ee7e,#55bd45)]">
          <rect x="12" y="23" width="40" height="36" rx="9" fill="#f0f8ee" />
          <path d="M54 38l12-10c1-1 3-.5 3 1.500v23c0 2-2 2.500-3 1.500L54 45z" fill="#d8f0d4" />
        </AppIcon>
      </DockItem>
      <DockItem>
        <div className="flex size-[82px] shrink-0 flex-col overflow-hidden rounded-[19px] bg-[#f8f8f6] text-center">
          <div className="h-[26px] bg-[#e25d53] text-[18px] leading-[27px] font-semibold text-white">AUG</div>
          <div className="text-[49px] leading-[53px] font-light tracking-[-0.03em] text-[#222]">21</div>
        </div>
      </DockItem>
      <DockItem>
        <AppIcon className="bg-[linear-gradient(#b0935e,#9b7745)]">
          <circle cx="41" cy="41" r="25" fill="none" stroke="#7d6236" strokeWidth="2" />
          <circle cx="41" cy="35" r="9" fill="#8a6c3d" />
          <path d="M24 58c3-14 31-14 34 0-8 10-26 10-34 0z" fill="#8a6c3d" />
          <path d="M79 12h3v16h-3z" fill="#c9c9c9" /><path d="M79 28h3v15h-3z" fill="#62b4ee" /><path d="M79 43h3v15h-3z" fill="#ee9a3a" /><path d="M79 58h3v14h-3z" fill="#65c95a" />
        </AppIcon>
      </DockItem>
      <DockItem badge="2">
        <AppIcon className="bg-[#fafaf8]">
          <path d="M31 21h42M31 41h42M31 61h42" stroke="#c4c4c6" strokeWidth="2" />
          <g strokeWidth="1.500"><circle cx="17" cy="21" r="6.500" fill="none" stroke="#3a7bf0" /><circle cx="17" cy="41" r="6.500" fill="none" stroke="#e8483c" /><circle cx="17" cy="61" r="6.500" fill="none" stroke="#ee9a38" /></g>
          <circle cx="17" cy="21" r="4.500" fill="#3a7bf0" /><circle cx="17" cy="41" r="4.500" fill="#e8483c" /><circle cx="17" cy="61" r="4.500" fill="#ee9a38" />
        </AppIcon>
      </DockItem>
      <DockItem>
        <AppIcon className="bg-[linear-gradient(#fafafa,#e6e6e2)]">
          <path d="M0 0h82v21H0z" fill="#f8cf4a" />
          <path d="M0 25h82" stroke="#b9b9b5" strokeWidth="1.500" strokeDasharray="1.500 1.500" />
          <path d="M0 22h82M0 41h82M0 61h82" stroke="#cfcfcc" strokeWidth="1.500" />
        </AppIcon>
      </DockItem>
      <DockItem>
        <AppIcon className="bg-[linear-gradient(#ec6577,#e63a42)]">
          <path d="M30 20l29-7v42c0 6-4 8-8 8s-7-2-7-6 3-7 8-7l3-1V27l-21 5v29c0 5-4 7-8 7s-8-2-8-6 3-7 8-7l4-1z" fill="#fff" />
        </AppIcon>
      </DockItem>
      <DockItem>
        <AppIcon className="bg-white">
          <circle cx="33" cy="49" r="24" fill="#f08a50" />
          <rect x="27" y="11" width="44" height="44" rx="4" fill="#5cc8f0" opacity="0.9" />
          <path d="M16 53c7-8 11-22 17-22 5 0-3 21 3 21 5 0 9-20 14-20 4 0-3 18 3 19 6 0 12-6 20-15" fill="none" stroke="#14406e" strokeWidth="4" strokeLinecap="round" />
        </AppIcon>
      </DockItem>
      <DockItem>
        <div className="flex size-[82px] shrink-0 items-center justify-center rounded-[19px] bg-[linear-gradient(#2b3634,#0c1113)] text-[36px] font-medium tracking-[-0.04em] text-white">
          <FaApple className="-mt-1 size-[30px]" />
          <span className="-mt-1">tv</span>
        </div>
      </DockItem>
      <DockItem>
        <AppIcon className="bg-white">
          <path d="M17 17h12l36 40v8H53L17 27zM38 17h27v28zM17 38l25 27H17z" fill="#ea4a5f" />
        </AppIcon>
      </DockItem>
      <DockItem>
        <AppIcon className="bg-[linear-gradient(#5fc6f8,#3060e8)]">
          <path d="M22 12h38l5 25H17z" fill="#f4f6fa" />
          <circle cx="41" cy="22" r="8" fill="#f0b83e" /><path d="M41 22v-8a8 8 0 018 8z" fill="#4a9de8" /><path d="M41 22h8a8 8 0 01-8 8z" fill="#67b84f" /><path d="M41 22h-8a8 8 0 018-8z" fill="#b24a9a" />
          <path d="M41 37v31M29 69h24" stroke="#dde3ee" strokeWidth="4" />
        </AppIcon>
      </DockItem>
      <DockItem>
        <AppIcon className="bg-[linear-gradient(#96f078,#5fce42)]">
          <path d="M20 57v10M34 43v24M48 17v50M62 32v35" stroke="#f6fbf4" strokeWidth="9" strokeLinecap="round" />
        </AppIcon>
      </DockItem>
      <DockItem>
        <AppIcon className="bg-[linear-gradient(#f5b54a,#ee8e38)]">
          <path d="M13 70l4-11L60 17c3-3 8 2 5 5L24 64z" fill="#fafafa" />
          <path d="M28 69h42" stroke="#fbdcae" strokeWidth="3" />
          <path d="M13 70l2-5 3 3z" fill="#555" />
        </AppIcon>
      </DockItem>
      <DockItem>
        <AppIcon className="bg-[linear-gradient(#48b0f4,#2358dc)]">
          <path d="M45 18L28 50M36 18l26 46M22 59l-3 5M14 50h30M56 50h12" stroke="#fff" strokeWidth="6.500" strokeLinecap="round" />
        </AppIcon>
      </DockItem>
      <DockItem>
        <AppIcon className="bg-[linear-gradient(#d9e2e8,#8c8c8a)]">
          <circle cx="41" cy="41" r="34" fill="#3a3c3e" />
          <circle cx="41" cy="41" r="31" fill="none" stroke="#a8acae" strokeWidth="4" strokeDasharray="2.500 1.700" />
          <circle cx="41" cy="41" r="25" fill="#707375" stroke="#b8bbbd" strokeWidth="3" />
          <circle cx="41" cy="41" r="14" fill="none" stroke="#3a3c3e" strokeWidth="7" />
          <path d="M41 41h25M41 41L28 20M41 41L28 62" stroke="#b8bbbd" strokeWidth="3.500" />
        </AppIcon>
      </DockItem>
      <DockItem>
        <AppIcon className="bg-[#b2b3b4]">
          <rect x="25" y="7" width="33" height="69" rx="6" fill="#1a1a1c" />
          <rect x="27" y="9" width="29" height="65" rx="4.500" fill="#eda797" />
          <path d="M56 34C44 40 38 56 31 74h21a4 4 0 004-4z" fill="#1e5b78" />
          <path d="M56 12C46 26 40 44 36 60c5-14 12-22 20-28z" fill="#7b6f78" />
          <rect x="36" y="11" width="11" height="4" rx="2" fill="#000" />
        </AppIcon>
      </DockItem>
      <div className="mt-4 mr-[23px] ml-[23px] h-[94px] w-[2px] bg-[#4a4a4a]" />
      <DockItem dot>
        <AppIcon className="bg-[#f4f4f4]">
          <path d="M41 41L10.700 23.500A35 35 0 0171.300 23.500z" fill="#dc4437" />
          <path d="M41 41L10.700 23.500A35 35 0 0041 76l15-26z" fill="#3f9f52" />
          <path d="M71.300 23.500H41l15 26.500-15 26a35 35 0 0030.300-52.500z" fill="#f6c344" />
          <circle cx="41" cy="41" r="16.500" fill="#fff" />
          <circle cx="41" cy="41" r="13.500" fill="#4480ec" />
        </AppIcon>
      </DockItem>
      <DockItem dot badge="306">
        <div className="flex size-[82px] shrink-0 items-center justify-center rounded-[19px] bg-[linear-gradient(#86ee7e,#52b845)]">
          <FaWhatsapp className="size-[70px] text-white" />
        </div>
      </DockItem>
      <DockItem dot>
        <AppIcon className="bg-[linear-gradient(135deg,#7a52cc,#c86fb8_35%,#5a6ad8_75%,#3a62c8)]">
          <rect x="4" y="4" width="74" height="74" rx="15" fill="#fff" />
          <path d="M28 14h41v54H28z" fill="#2f86dc" />
          <path d="M28 14h41v7H28z" fill="#2058a8" /><path d="M55 21h14v13H55z" fill="#6ed0f8" /><path d="M42 34h13v12H42z" fill="#2a6fc8" /><path d="M55 34h14v14H55z" fill="#4a9fe2" />
          <path d="M26 52l16-5 7 8 20-7v18a3 3 0 01-3 3H29a3 3 0 01-3-3z" fill="#52a8e6" />
          <path d="M42 47h18l-11 9z" fill="#2a6cc0" />
          <rect x="11" y="26" width="30" height="31" rx="3" fill="#2068c8" />
          <ellipse cx="26" cy="41.500" rx="6.500" ry="7.500" fill="none" stroke="#fff" strokeWidth="3.500" />
        </AppIcon>
      </DockItem>
      <DockItem dot>
        <AppIcon className="bg-[#1e1436]">
          <defs>
            <linearGradient id="fx" x1="0.850" y1="0" x2="0.300" y2="1"><stop offset="0.200" stopColor="#ffe14d" /><stop offset="0.550" stopColor="#ff8a3a" /><stop offset="1" stopColor="#e02f6e" /></linearGradient>
            <linearGradient id="fxg" x1="0.700" y1="0" x2="0.200" y2="1"><stop offset="0" stopColor="#9a35e0" /><stop offset="1" stopColor="#5c5cf0" /></linearGradient>
          </defs>
          <path d="M51 4c3 12 11 17 16 25 0-4 0-6-1-8 6 7 10 15 10 23 0 19-15 33-35 33S5 62 5 43c0-9 3-17 8-22l1-6c2 5 4 8 7 9 2-1 5-5 7-6 0 4 1 6 2 7l10-1c-1-6 5-13 11-20z" fill="url(#fx)" />
          <circle cx="41" cy="41" r="17" fill="url(#fxg)" />
          <path d="M14 33c7-2 11 2 15 2l11-2c0 5-6 6-9 8-4 4 2 13 10 16 9 2 17-4 17-15l-3-11c9 5 12 17 7 27-7 10-24 13-35 5-8-6-10-18-6-25z" fill="#ff9a35" />
          <path d="M54 28c10 6 13 19 6 29 10-8 11-24-2-33z" fill="#ffdc50" />
        </AppIcon>
      </DockItem>
      <div className="mt-4 mr-[22px] ml-[23px] h-[94px] w-[2px] bg-[#4a4a4a]" />
      <DockItem>
        <svg viewBox="0 0 64 92" className="-mt-[6px] h-[92px] w-16">
          <path d="M8 0h32l24 31v61H0V9h5z" fill="#f2f2f2" />
          <path d="M40 0l24 31H44c-2-9 0-22-4-31z" fill="#d6d6d6" />
          <path d="M6 12h26M6 16h30M6 20h24M6 26h34M6 30h28M6 36h44M6 40h48M6 44h38M6 50h30M6 54h20M6 60h34M6 64h14M6 70h16M6 76h30M6 80h50M6 86h46" stroke="#b4b4b4" strokeWidth="1.300" />
          <path d="M27 2h11" stroke="#333" strokeWidth="3" />
        </svg>
      </DockItem>
      <DockItem>
        <svg viewBox="0 0 72 94" className="-mt-[8px] h-[94px] w-[72px]">
          <path d="M8 18L22 2l10 8L44 0l8 10 12-2 4 12-10 14H14z" fill="#dcdcdc" />
          <path d="M20 12l8 10 6-10 8 12 6-14 6 12" fill="none" stroke="#555" strokeWidth="2.500" />
          <path d="M30 14l6 3-3 5zM42 10l5 2-2 5z" fill="#3f8fd0" />
          <path d="M1 14l10 72c3 8 47 8 50 0L71 14C66 24 6 24 1 14z" fill="#63676a" />
          <path d="M20 22l6 68M36 23v69M52 22l-6 68" stroke="#777c7f" strokeWidth="5" opacity="0.500" />
          <path d="M1 14c5 10 65 10 70 0" fill="none" stroke="#a9adb0" strokeWidth="1.500" />
        </svg>
      </DockItem>
    </div>
  );
}

export default function App() {
  return (
    <div className="h-[2224px] w-[3420px] overflow-hidden bg-black font-['Inter',sans-serif]">
      <div className="flex h-full flex-col">
        <MenuBar />
        <div className="relative flex h-[1992px] w-[3420px] shrink-0 flex-col overflow-hidden rounded-[22px] border-2 border-[#5c5b60] border-b-[#3e3e42] border-r-[#3e3e42]">
          <TabStrip />
          <Toolbar />
          <div className="flex min-h-0 flex-1">
            <Sidebar />
            <div className="flex min-w-0 flex-1 flex-col">
              <div className="flex h-[90px] shrink-0 items-center border-b-2 border-[#2a5590] bg-[#193f7e] pt-[2px] pr-[48px] pl-[33px] text-[28px] text-[#f3f5f9]">
                <div className="tracking-[-0.0115em] whitespace-nowrap">
                  This is a temporary development preview, and these links are not for public use.{" "}
                  <span className="font-medium underline decoration-2 underline-offset-[6px]">Deploy your app</span> for secure sharing or use an invite link.
                </div>
                <Close className="ml-auto size-[19px] text-[#c9d4e6]" />
              </div>
              <Page />
            </div>
          </div>
          <QuestDialog />
        </div>
        <div className="h-[6px] shrink-0" />
        <Dock />
      </div>
    </div>
  );
}
